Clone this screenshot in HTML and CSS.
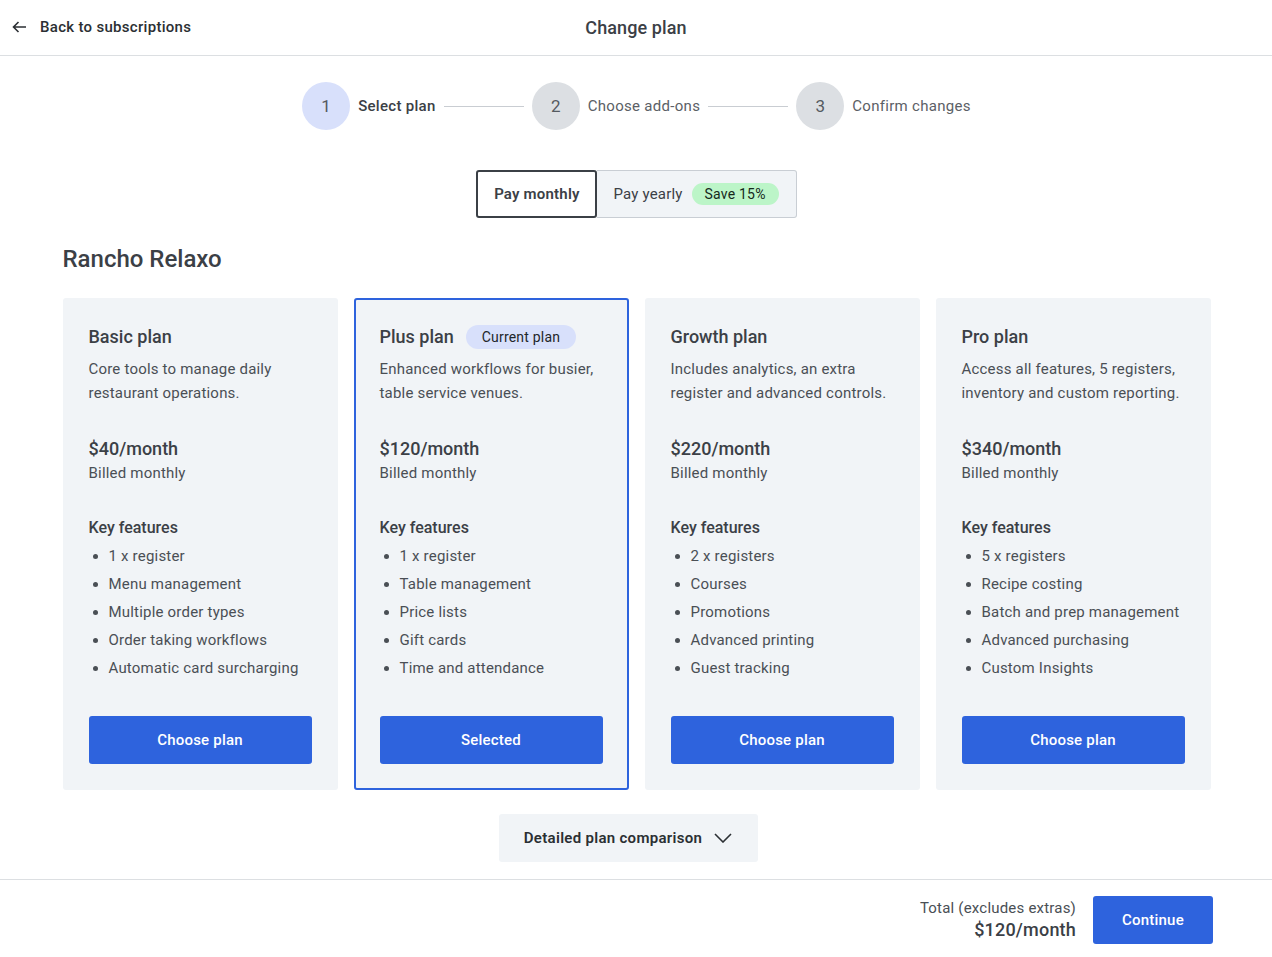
FILE: index.html
```html
<!DOCTYPE html>
<html lang="en">
<head>
  <meta charset="UTF-8" />
  <title>Change plan</title>
  <link rel="stylesheet" href="styles.css">
</head>
<body>
  <header class="topbar">
    <a class="back-link" href="#">
      <svg width="15" height="12" viewBox="0 0 15 12" fill="none" stroke="#2b2f33" stroke-width="1.6">
        <path d="M14 6H1.5M6.5 1L1.5 6l5 5" />
      </svg>
      Back to subscriptions
    </a>
    <h1 class="page-title">Change plan</h1>
  </header>

  <main class="content">
    <ol class="stepper">
      <li class="step active"><span class="step-num">1</span><span class="step-label">Select plan</span></li>
      <li class="step-line"></li>
      <li class="step"><span class="step-num">2</span><span class="step-label">Choose add-ons</span></li>
      <li class="step-line"></li>
      <li class="step"><span class="step-num">3</span><span class="step-label">Confirm changes</span></li>
    </ol>

    <div class="billing-toggle">
      <button class="toggle-opt selected">Pay monthly</button>
      <button class="toggle-opt">Pay yearly <span class="save-badge">Save 15%</span></button>
    </div>

    <h2 class="venue-name">Rancho Relaxo</h2>

    <div class="plans">
      <div class="plan">
        <h3 class="plan-name">Basic plan</h3>
        <p class="plan-desc">Core tools to manage daily restaurant operations.</p>
        <div class="plan-price">$40/month</div>
        <div class="plan-billed">Billed monthly</div>
        <h4 class="features-title">Key features</h4>
        <ul class="features">
          <li>1 x register</li>
          <li>Menu management</li>
          <li>Multiple order types</li>
          <li>Order taking workflows</li>
          <li>Automatic card surcharging</li>
        </ul>
        <button class="plan-btn">Choose plan</button>
      </div>

      <div class="plan current">
        <h3 class="plan-name">Plus plan <span class="current-badge">Current plan</span></h3>
        <p class="plan-desc">Enhanced workflows for busier, table service venues.</p>
        <div class="plan-price">$120/month</div>
        <div class="plan-billed">Billed monthly</div>
        <h4 class="features-title">Key features</h4>
        <ul class="features">
          <li>1 x register</li>
          <li>Table management</li>
          <li>Price lists</li>
          <li>Gift cards</li>
          <li>Time and attendance</li>
        </ul>
        <button class="plan-btn">Selected</button>
      </div>

      <div class="plan">
        <h3 class="plan-name">Growth plan</h3>
        <p class="plan-desc">Includes analytics, an extra register and advanced controls.</p>
        <div class="plan-price">$220/month</div>
        <div class="plan-billed">Billed monthly</div>
        <h4 class="features-title">Key features</h4>
        <ul class="features">
          <li>2 x registers</li>
          <li>Courses</li>
          <li>Promotions</li>
          <li>Advanced printing</li>
          <li>Guest tracking</li>
        </ul>
        <button class="plan-btn">Choose plan</button>
      </div>

      <div class="plan">
        <h3 class="plan-name">Pro plan</h3>
        <p class="plan-desc">Access all features, 5 registers, inventory and custom reporting.</p>
        <div class="plan-price">$340/month</div>
        <div class="plan-billed">Billed monthly</div>
        <h4 class="features-title">Key features</h4>
        <ul class="features">
          <li>5 x registers</li>
          <li>Recipe costing</li>
          <li>Batch and prep management</li>
          <li>Advanced purchasing</li>
          <li>Custom Insights</li>
        </ul>
        <button class="plan-btn">Choose plan</button>
      </div>
    </div>

    <div class="compare-wrap">
      <button class="compare-btn">
        Detailed plan comparison
        <svg width="18" height="10" viewBox="0 0 18 10" fill="none" stroke="#2b2f33" stroke-width="1.6">
          <path d="M1 1l8 8 8-8" />
        </svg>
      </button>
    </div>
  </main>

  <footer class="footer">
    <div class="total">
      <div class="total-label">Total (excludes extras)</div>
      <div class="total-price">$120/month</div>
    </div>
    <button class="continue-btn">Continue</button>
  </footer>
</body>
</html>
```

FILE: styles.css
```css
* {
  box-sizing: border-box;
}

body {
  margin: 0;
  font-family: Roboto, "Noto Sans", sans-serif;
  color: #3b4046;
  background: #fff;
}

button {
  font-family: inherit;
  cursor: pointer;
}

.topbar {
  height: 56px;
  border-bottom: 1px solid #dcdfe2;
  display: flex;
  align-items: center;
  justify-content: center;
  position: relative;
}

.back-link {
  position: absolute;
  left: 12px;
  top: 18px;
  display: flex;
  align-items: center;
  gap: 13px;
  font-size: 15px;
  font-weight: 500;
  color: #2b2f33;
  text-decoration: none;
  letter-spacing: 0.3px;
}

.page-title {
  margin: 0;
  font-size: 18px;
  font-weight: 500;
  color: #3b4046;
  letter-spacing: 0.1px;
}

.content {
  max-width: 1149px;
  margin: 0 auto;
  padding: 26px 0 0 1px;
}

.stepper {
  list-style: none;
  margin: 0;
  padding: 0;
  display: flex;
  align-items: center;
  justify-content: center;
}

.step {
  display: flex;
  align-items: center;
  gap: 8px;
}

.step-num {
  width: 48px;
  height: 48px;
  border-radius: 50%;
  background: #dcdfe3;
  display: flex;
  align-items: center;
  justify-content: center;
  font-size: 17px;
  color: #555a60;
}

.step.active .step-num {
  background: #d8e0fb;
}

.step-label {
  font-size: 15px;
  color: #5b6066;
  letter-spacing: 0.3px;
}

.step.active .step-label {
  font-weight: 500;
  color: #3b4046;
}

.step-line {
  width: 80px;
  height: 1px;
  background: #c9cdd2;
  margin: 0 8px;
}

.billing-toggle {
  display: flex;
  justify-content: center;
  margin-top: 40px;
}

.toggle-opt {
  height: 48px;
  border: 1px solid #c9ced4;
  border-left: none;
  background: #f1f4f7;
  border-radius: 0 3px 3px 0;
  font-size: 15px;
  color: #3b4046;
  padding: 0 17px 0 16px;
  display: flex;
  align-items: center;
  gap: 9px;
  letter-spacing: 0.2px;
}

.toggle-opt.selected {
  width: 121px;
  justify-content: center;
  border: 2px solid #3b4046;
  border-radius: 3px;
  background: #fff;
  font-weight: 600;
  padding: 0;
}

.save-badge {
  background: #bcf5c8;
  color: #16291c;
  font-size: 14px;
  border-radius: 12px;
  padding: 3px 13px;
}

.venue-name {
  margin: 27px 0 25px;
  font-size: 24px;
  font-weight: 500;
  color: #3b4046;
}

.plans {
  display: grid;
  grid-template-columns: repeat(4, 1fr);
  gap: 16px;
}

.plan {
  background: #f1f4f7;
  border: 2px solid transparent;
  border-radius: 3px;
  padding: 25px 24px 24px;
  display: flex;
  flex-direction: column;
}

.plan.current {
  border-color: #2e63dd;
}

.plan-name {
  margin: 0;
  font-size: 18px;
  font-weight: 500;
  line-height: 24px;
  color: #3b4046;
  display: flex;
  align-items: center;
  gap: 12px;
}

.current-badge {
  background: #d8e0fb;
  color: #22262a;
  font-size: 14px;
  font-weight: 400;
  border-radius: 12px;
  padding: 0 16px;
  line-height: 24px;
  letter-spacing: 0.2px;
}

.plan-desc {
  margin: 8px 0 0;
  font-size: 15px;
  line-height: 24px;
  letter-spacing: 0.2px;
  color: #4a4f55;
}

.plan-price {
  margin-top: 32px;
  font-size: 18px;
  font-weight: 500;
  line-height: 24px;
  color: #3b4046;
}

.plan-billed {
  font-size: 15px;
  line-height: 24px;
  letter-spacing: 0.2px;
  color: #4a4f55;
}

.features-title {
  margin: 31px 0 0;
  font-size: 16px;
  font-weight: 500;
  line-height: 24px;
  color: #3b4046;
}

.features {
  margin: 2px 0 0;
  padding-left: 20px;
  font-size: 15px;
  line-height: 28px;
  letter-spacing: 0.2px;
  color: #4a4f55;
}

.plan-btn {
  margin-top: 34px;
  height: 48px;
  border: none;
  border-radius: 3px;
  background: #2e63dd;
  color: #fff;
  font-size: 15px;
  font-weight: 500;
  letter-spacing: 0.2px;
}

.compare-wrap {
  display: flex;
  justify-content: center;
  margin-top: 24px;
  padding-bottom: 17px;
}

.compare-btn {
  height: 48px;
  width: 259px;
  margin-right: 17px;
  border: none;
  border-radius: 3px;
  background: #f1f4f7;
  font-size: 15px;
  font-weight: 600;
  color: #2b2f33;
  letter-spacing: 0.3px;
  display: flex;
  align-items: center;
  justify-content: center;
  gap: 12px;
}

.footer {
  border-top: 1px solid #dcdfe2;
  display: flex;
  align-items: center;
  justify-content: flex-end;
  gap: 17px;
  padding: 16px 59px 16px 0;
}

.total {
  text-align: right;
}

.total-label {
  font-size: 15px;
  line-height: 20px;
  color: #4a4f55;
  letter-spacing: 0.2px;
}

.total-price {
  font-size: 18px;
  font-weight: 500;
  line-height: 24px;
  color: #3b4046;
  letter-spacing: 0.2px;
}

.continue-btn {
  width: 120px;
  height: 48px;
  border: none;
  border-radius: 3px;
  background: #2e63dd;
  color: #fff;
  font-size: 15px;
  font-weight: 500;
  letter-spacing: 0.2px;
}
```
